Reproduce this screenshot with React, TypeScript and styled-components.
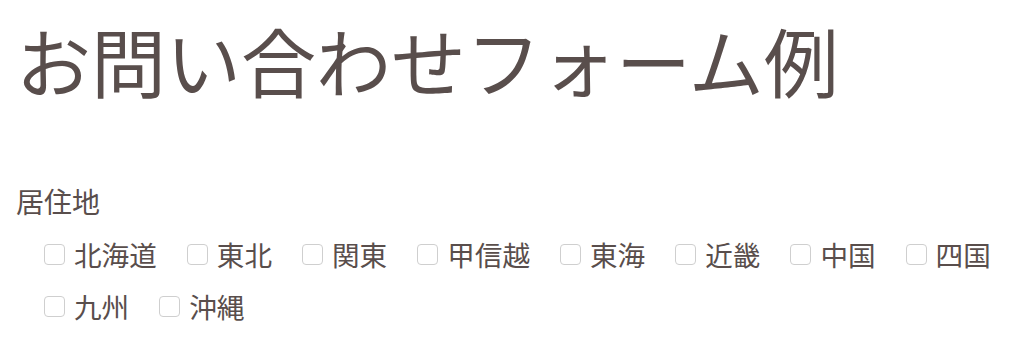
import styled, { createGlobalStyle } from "styled-components";

const GlobalStyle = createGlobalStyle`
  body {
    margin: 0;
    background: #ffffff;
    color: #594e4c;
    font-family: "Noto Sans CJK JP", "Noto Sans", sans-serif;
  }
`;

const Page = styled.div`
  padding: 0 16px;
`;

const Title = styled.h1`
  margin: 22px 0 0;
  font-size: 75px;
  font-weight: 400;
  line-height: 1;
`;

const Fieldset = styled.fieldset`
  margin: 90px 0 0;
  padding: 0;
  border: none;
`;

const Legend = styled.legend`
  padding: 0;
  font-size: 28px;
  line-height: 1;
`;

const Options = styled.div`
  display: flex;
  flex-wrap: wrap;
  column-gap: 30px;
  margin-top: 13px;
  padding-left: 28px;
`;

const Option = styled.label`
  display: flex;
  align-items: center;
  height: 52px;
  font-size: 27.6px;
  cursor: pointer;
`;

const Box = styled.input.attrs({ type: "checkbox" })`
  appearance: none;
  flex-shrink: 0;
  box-sizing: border-box;
  width: 21px;
  height: 21px;
  margin: 0 9px 0 0;
  border: 1px solid #cfcfcf;
  border-radius: 4px;
  background: #fff;

  &:checked {
    background: #594e4c;
    border-color: #594e4c;
  }
`;

const regions = ["北海道", "東北", "関東", "甲信越", "東海", "近畿", "中国", "四国", "九州", "沖縄"];

export default function App() {
  return (
    <>
      <GlobalStyle />
      <Page>
        <Title>お問い合わせフォーム例</Title>
        <Fieldset>
          <Legend>居住地</Legend>
          <Options>
            {regions.map((r) => (
              <Option key={r}>
                <Box name="area" value={r} />
                {r}
              </Option>
            ))}
          </Options>
        </Fieldset>
      </Page>
    </>
  );
}
